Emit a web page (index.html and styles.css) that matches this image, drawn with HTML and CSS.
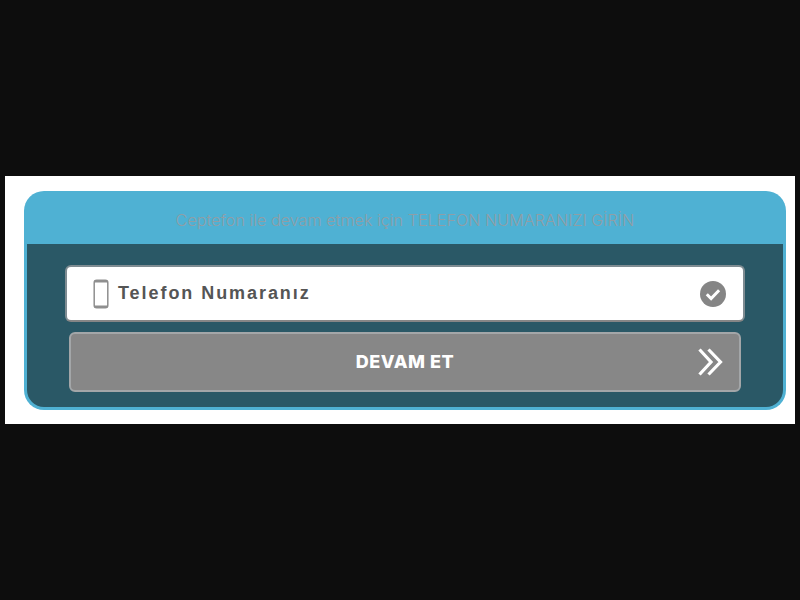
FILE: index.html
```html
<!DOCTYPE html>
<html lang="tr">
<head>
<meta charset="utf-8">
<title>Telefon</title>
<link rel="stylesheet" href="styles.css">
</head>
<body>
<main class="panel">
  <section class="card">
    <header class="card-head">Ceptefon ile devam etmek için TELEFON NUMARANIZI GİRİN</header>
    <div class="card-body">
      <div class="phone-field">
        <svg class="phone-icon" width="16" height="30" viewBox="0 0 16 30" aria-hidden="true">
          <rect x="1.200" y="1.200" width="13.600" height="27.600" rx="2.500" fill="#fff" stroke="#8f8f8f" stroke-width="1.500"/>
          <path d="M1 3.500a2.500 2.500 0 0 1 2.500-2.500h9a2.500 2.500 0 0 1 2.500 2.500v0H1z" fill="#8f8f8f"/>
          <path d="M1 26.500h14a2.500 2.500 0 0 1-2.500 2.500h-9A2.500 2.500 0 0 1 1 26.500z" fill="#8f8f8f"/>
        </svg>
        <span class="phone-label">Telefon Numaranız</span>
        <svg class="check-icon" width="26" height="26" viewBox="0 0 26 26" aria-hidden="true">
          <circle cx="13" cy="13" r="13" fill="#858585"/>
          <path d="M6.800 13.300l4.300 4.300 8-8.300" fill="none" stroke="#fff" stroke-width="3"/>
        </svg>
      </div>
      <button class="submit" type="button">
        <span>DEVAM ET</span>
        <svg class="chevrons" width="26" height="28" viewBox="0 0 26 28" aria-hidden="true">
          <path d="M1.500 1.500L13 14 1.500 26.500M10.500 1.500L22.500 14 10.500 26.500" fill="none" stroke="#fff" stroke-width="3.200"/>
        </svg>
      </button>
    </div>
  </section>
</main>
</body>
</html>
```
FILE: styles.css
```css
html, body {
  margin: 0;
  height: 100%;
}
body {
  background: #0d0d0d;
  display: flex;
  align-items: flex-start;
  justify-content: center;
  padding-top: 176px;
  box-sizing: border-box;
  height: 600px;
  overflow: hidden;
}
.panel {
  width: 790px;
  height: 248px;
  background: #fff;
  padding: 15px 9px 14px 19px;
  box-sizing: border-box;
}
.card {
  width: 762px;
  height: 219px;
  box-sizing: border-box;
  background: #4fb1d3;
  padding: 0 3px 3px;
  border-radius: 20px;
  display: flex;
  flex-direction: column;
}
.card-head {
  height: 53px;
  flex: none;
  color: #8f9ea6;
  font: 300 16.200px/58px Inter, sans-serif;
  text-align: center;
  white-space: nowrap;
}
.card-body {
  flex: 1;
  background: #2a5866;
  border-radius: 0 0 17px 17px;
  padding: 21px 38px 0;
  display: flex;
  flex-direction: column;
  align-items: center;
}
.phone-field {
  width: 680px;
  height: 57px;
  flex: none;
  box-sizing: border-box;
  background: #fff;
  border: 2px solid #7f8c92;
  border-bottom-color: #868686;
  border-radius: 6px;
  display: flex;
  align-items: center;
  padding: 0 17px 0 26px;
}
.phone-icon {
  flex: none;
}
.phone-label {
  margin-left: 9px;
  flex: 1;
  font: bold 18px "Liberation Sans", Arial, sans-serif;
  letter-spacing: 1.940px;
  color: #555;
}
.check-icon {
  flex: none;
}
.submit {
  width: 672px;
  height: 60px;
  flex: none;
  margin-top: 10px;
  box-sizing: border-box;
  background: #878787;
  border: 2px solid #a3a6a8;
  border-radius: 6px;
  position: relative;
  padding: 0 0 1px;
  color: #fff;
  font: 800 18px Inter, sans-serif;
  letter-spacing: 0.550px;
  display: flex;
  align-items: center;
  justify-content: center;
}
.chevrons {
  position: absolute;
  right: 15px;
  top: 14px;
}
```
